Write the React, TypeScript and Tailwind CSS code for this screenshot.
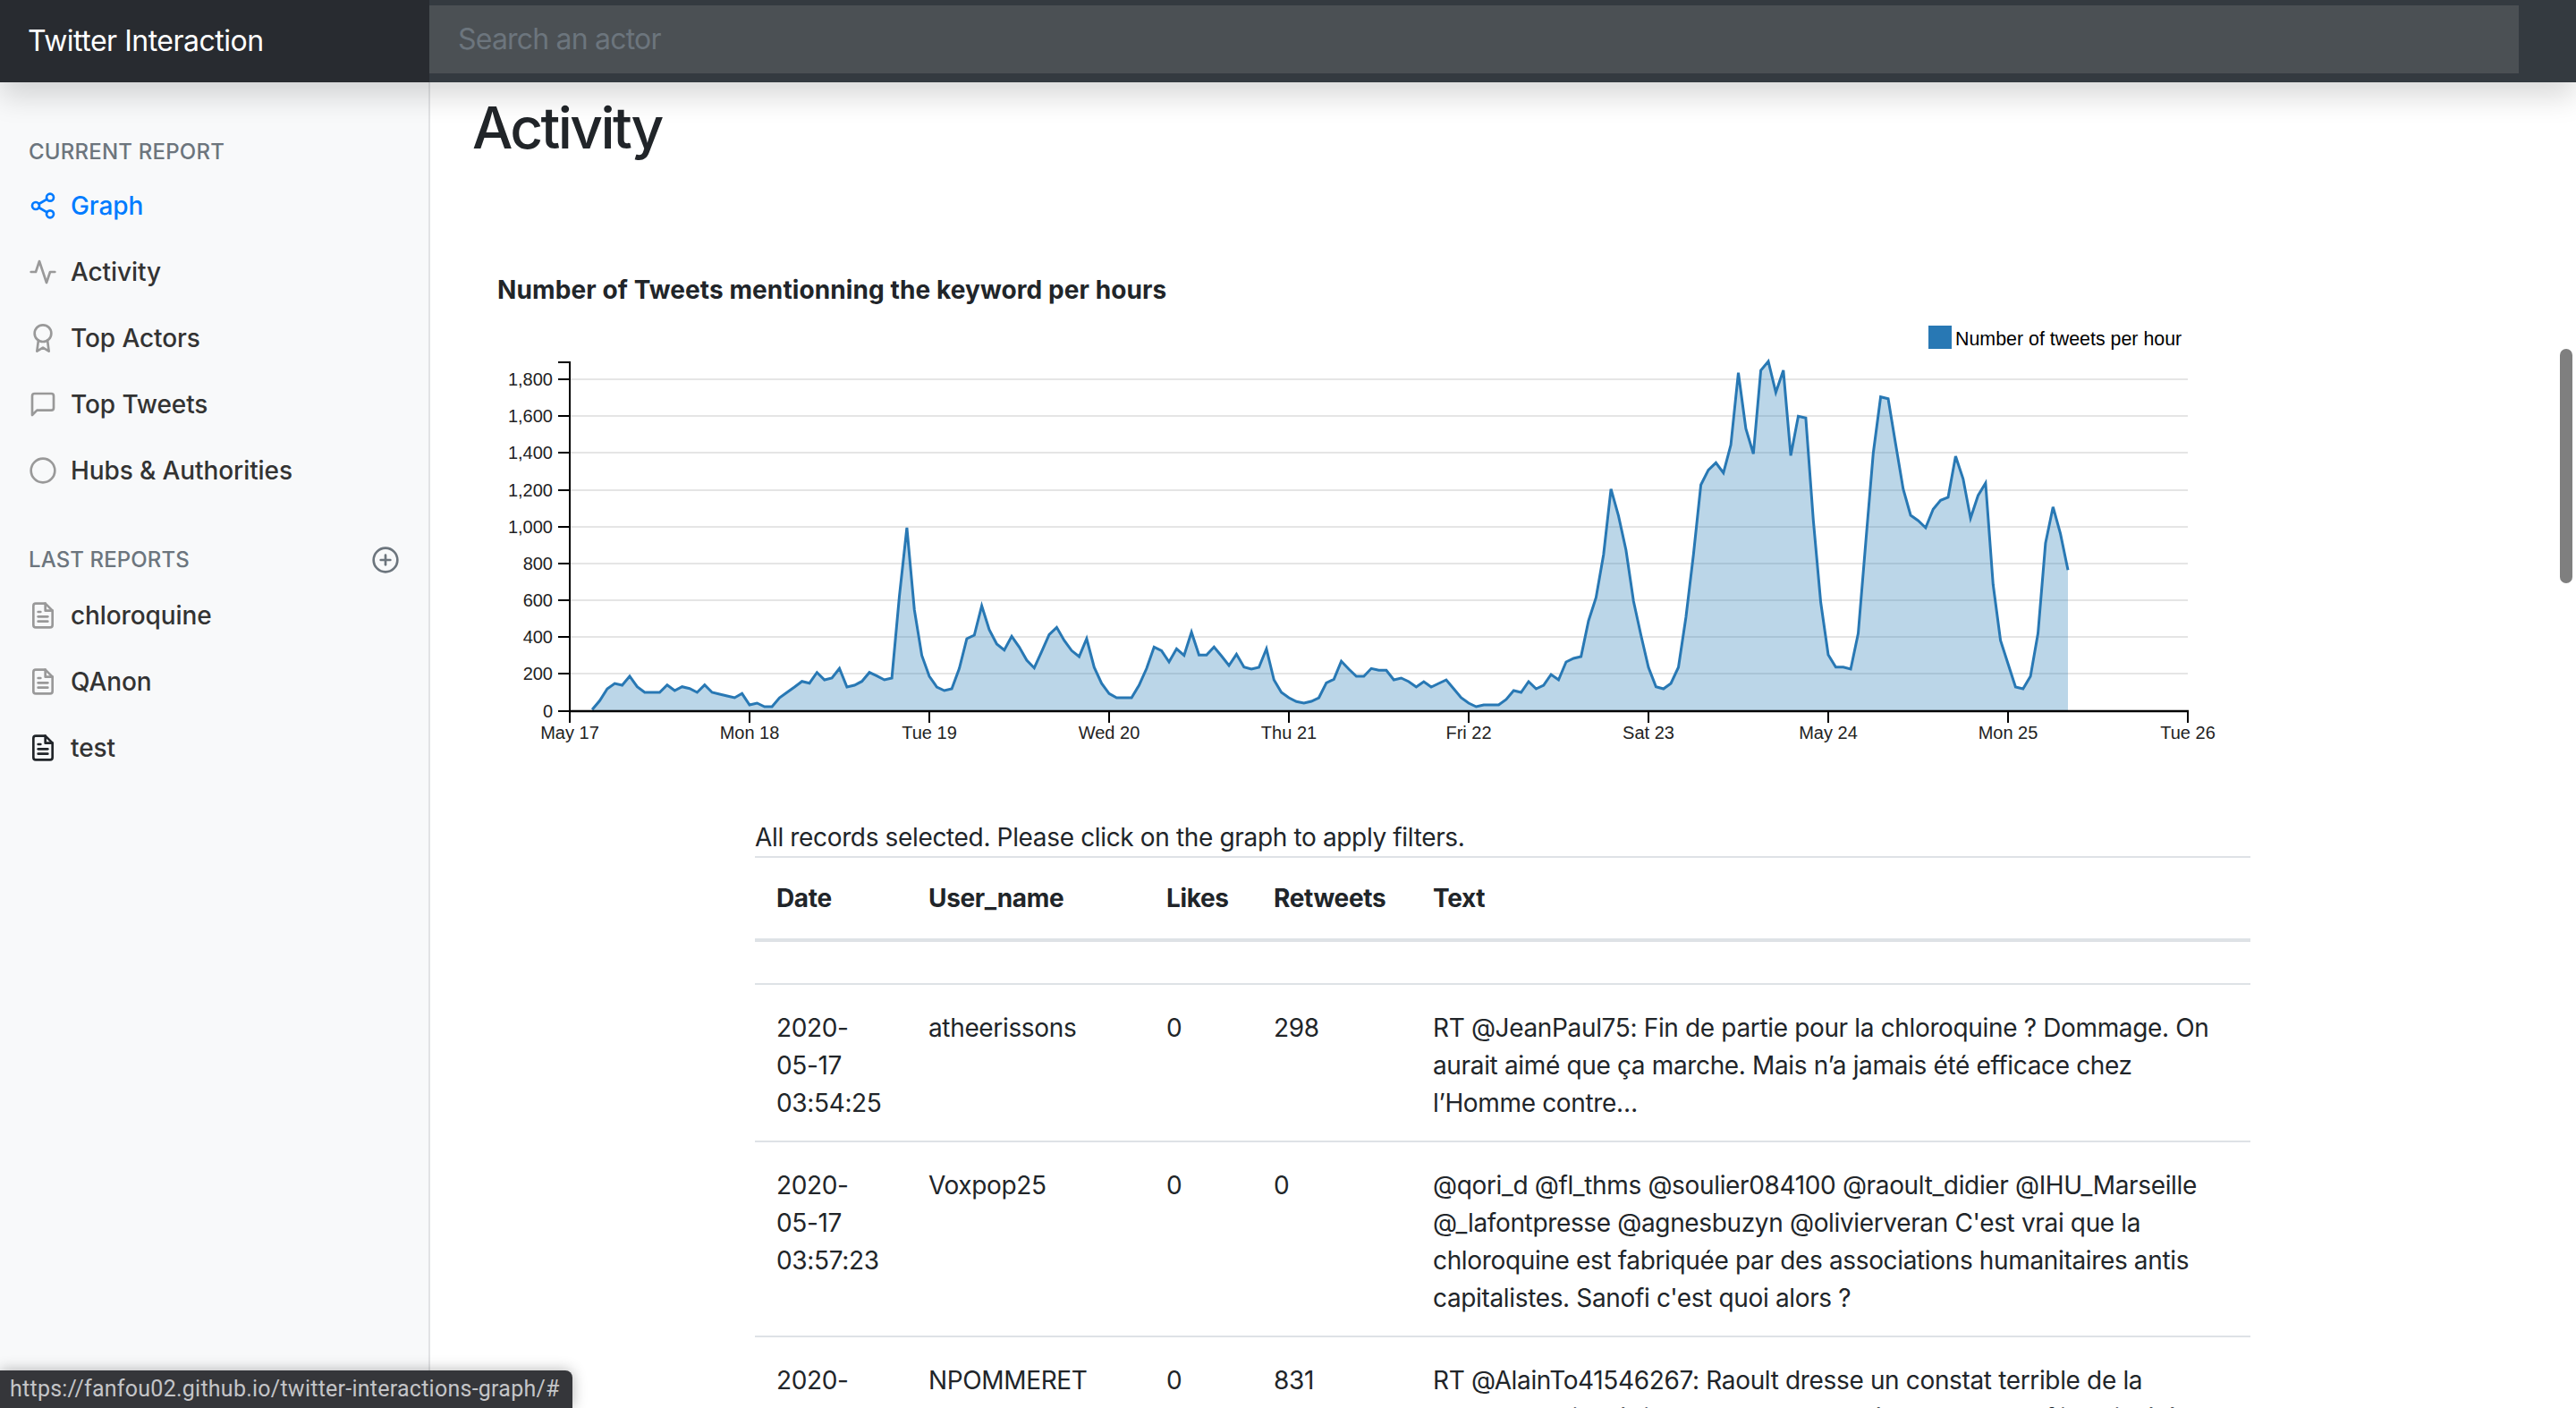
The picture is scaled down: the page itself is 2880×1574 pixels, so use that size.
/**
 * Twitter Interaction - activity report page
 */

import React from 'react';

// polyline heights read off the chart, in chart units: svg y = 340 + v / 3
const SEG_A = [1360, 1330, 1290, 1272, 1278, 1248, 1283, 1302, 1302, 1302, 1277, 1296, 1283, 1289, 1302, 1277, 1302, 1308, 1314, 1320, 1306, 1344, 1338, 1350, 1350, 1320, 1302, 1284, 1265, 1271, 1235, 1260, 1254, 1222, 1284, 1278, 1265, 1235, 1247, 1260, 1254, 980, 750, 1025, 1178, 1248, 1284, 1296, 1290, 1222, 1122, 1110, 1012, 1092, 1140, 1160, 1114, 1150, 1194, 1220, 1165, 1108, 1084, 1128, 1162, 1182, 1122];
const SEG_B = [1218, 1272, 1306, 1320, 1320, 1320, 1278, 1222, 1150, 1162, 1200, 1156, 1178, 1100, 1177, 1177, 1150, 1180, 1212, 1174, 1217, 1224, 1218, 1156, 1260, 1302, 1320, 1333, 1338, 1332, 1320, 1270, 1258, 1198, 1224, 1248, 1248, 1222, 1228, 1228, 1260, 1254, 1266, 1284, 1266, 1284, 1272, 1260, 1290, 1320, 1338, 1350, 1344, 1344, 1344, 1326, 1296, 1302, 1266, 1290, 1278, 1242, 1260, 1200, 1188, 1182, 1062, 984, 840];
const SEG_C = [620, 710, 825, 996, 1110, 1218, 1283, 1290, 1272, 1218, 1050, 840, 606, 556, 532, 566, 472, 230, 418, 502, 222, 192, 296, 222, 508, 376, 382, 724, 1000, 1176, 1217, 1217, 1224, 1104, 800, 500, 311, 317, 470, 620, 708, 726, 750, 688, 658, 648, 510, 586, 718, 642, 600, 940, 1128, 1206, 1284, 1290, 1248, 1104, 802, 680, 770, 892];

const toPoints = (values: number[], startHour: number) =>
  values.map((v, i) => `${(637 + (startHour + i) * 8.375).toFixed(1)},${(340 + v / 3).toFixed(1)}`);

const linePoints = [...toPoints(SEG_A, 3), ...toPoints(SEG_B, 70), ...toPoints(SEG_C, 139)];
const lastX = 637 + (139 + SEG_C.length - 1) * 8.375;
const areaPoints = [`${637 + 3 * 8.375},795`, ...linePoints, `${lastX},795`];

const yTicks = [
  { label: '0', y: 795 },
  { label: '200', y: 753 },
  { label: '400', y: 712 },
  { label: '600', y: 671 },
  { label: '800', y: 630 },
  { label: '1,000', y: 589 },
  { label: '1,200', y: 548 },
  { label: '1,400', y: 506 },
  { label: '1,600', y: 465 },
  { label: '1,800', y: 424 },
];

const xLabels = ['May 17', 'Mon 18', 'Tue 19', 'Wed 20', 'Thu 21', 'Fri 22', 'Sat 23', 'May 24', 'Mon 25', 'Tue 26'];

const rows = [
  {
    date: '2020-05-17 03:54:25',
    user: 'atheerissons',
    likes: '0',
    retweets: '298',
    text: 'RT @JeanPaul75: Fin de partie pour la chloroquine ? Dommage. On aurait aimé que ça marche. Mais n’a jamais été efficace chez l’Homme contre…',
  },
  {
    date: '2020-05-17 03:57:23',
    user: 'Voxpop25',
    likes: '0',
    retweets: '0',
    text: "@qori_d @fl_thms @soulier084100 @raoult_didier @IHU_Marseille @_lafontpresse @agnesbuzyn @olivierveran C'est vrai que la chloroquine est fabriquée par des associations humanitaires antis capitalistes. Sanofi c'est quoi alors ?",
  },
  {
    date: '2020-05-17 04:02:11',
    user: 'NPOMMERET',
    likes: '0',
    retweets: '831',
    text: 'RT @AlainTo41546267: Raoult dresse un constat terrible de la recherche biomédicale en France et dénonce les conflits d’intérêts…',
  },
];

const Feather: React.FC<{ className?: string; children: React.ReactNode }> = ({ className, children }) => (
  <svg
    viewBox="0 0 24 24"
    fill="none"
    stroke="currentColor"
    strokeWidth="2"
    strokeLinecap="round"
    strokeLinejoin="round"
    className={className}
  >
    {children}
  </svg>
);

const fileText = (
  <>
    <path d="M14 2H6a2 2 0 0 0-2 2v16a2 2 0 0 0 2 2h12a2 2 0 0 0 2-2V8z" />
    <polyline points="14 2 14 8 20 8" />
    <line x1="16" y1="13" x2="8" y2="13" />
    <line x1="16" y1="17" x2="8" y2="17" />
    <polyline points="10 9 9 9 8 9" />
  </>
);

const NavItem: React.FC<{ icon: React.ReactNode; label: string; active?: boolean; iconClass?: string }> = ({
  icon,
  label,
  active,
  iconClass,
}) => (
  <li className={`flex items-center h-[74px] pl-8 text-[28px] leading-[42px] font-medium tracking-[-0.1px] ${active ? 'text-[#007bff]' : 'text-[#333]'}`}>
    <Feather className={`w-8 h-8 mr-[15px] shrink-0 ${active ? 'text-[#007bff]' : iconClass ?? 'text-[#999]'}`}>{icon}</Feather>
    {label}
  </li>
);

const Chart: React.FC = () => (
  <svg viewBox="556 350 1960 490" className="w-[1960px] h-[490px] block" fontFamily='"Liberation Sans", Arial, sans-serif'>
    {yTicks.slice(1).map((t) => (
      <line key={t.label} x1="637" x2="2446" y1={t.y} y2={t.y} stroke="#e5e5e5" strokeWidth="2" />
    ))}
    <polygon points={areaPoints.join(' ')} fill="#1f77b4" fillOpacity="0.3" />
    <polyline points={linePoints.join(' ')} fill="none" stroke="#2878b4" strokeWidth="3" />

    <path d="M624 405H637V795" fill="none" stroke="#000" strokeWidth="2" />
    <line x1="636" x2="2447" y1="795" y2="795" stroke="#000" strokeWidth="2.5" />
    {yTicks.map((t) => (
      <g key={t.label}>
        <line x1="624" x2="637" y1={t.y} y2={t.y} stroke="#000" strokeWidth="2" />
        <text x="618" y={t.y + 7} textAnchor="end" fontSize="20" fill="#222">
          {t.label}
        </text>
      </g>
    ))}
    {xLabels.map((label, i) => (
      <g key={label}>
        <line x1={637 + i * 201} x2={637 + i * 201} y1="795" y2="808" stroke="#000" strokeWidth="2" />
        <text x={637 + i * 201} y="826" textAnchor="middle" fontSize="20" fill="#222">
          {label}
        </text>
      </g>
    ))}

    <rect x="2156" y="364" width="26" height="26" fill="#2878b4" />
    <text x="2186" y="386" fontSize="21.4" fill="#000">
      Number of tweets per hour
    </text>
  </svg>
);

export default function App() {
  return (
    <div className="relative h-screen overflow-hidden flex flex-col bg-white font-['Inter','Noto_Sans',sans-serif] text-[#212529]">
      {/* Navbar */}
      <header className="relative z-10 flex h-[92px] shrink-0 bg-[#343a40] shadow-[0_16px_32px_rgba(0,0,0,0.15)]">
        <div className="w-[480px] shrink-0 bg-[#282b30] pl-[31px] flex items-center text-[32px] tracking-[-0.5px] text-white">
          Twitter Interaction
        </div>
        <div className="w-[2336px] pt-[6px]">
          <div className="h-[76px] bg-[#4b5054] pl-8 flex items-center text-[32px] tracking-[-0.8px] text-[#6c757d]">Search an actor</div>
        </div>
      </header>

      <div className="flex flex-1 min-h-0">
        {/* Sidebar */}
        <aside className="w-[481px] shrink-0 bg-[#f8f9fa] border-r-2 border-[#e2e3e5] pt-[60px]">
          <h6 className="pl-8 h-[41px] text-[24px] leading-9 font-medium uppercase tracking-[0.2px] text-[#6c757d]">Current report</h6>
          <ul>
            <NavItem
              active
              label="Graph"
              icon={
                <>
                  <circle cx="18" cy="5" r="3" />
                  <circle cx="6" cy="12" r="3" />
                  <circle cx="18" cy="19" r="3" />
                  <line x1="8.59" y1="13.51" x2="15.42" y2="17.49" />
                  <line x1="15.41" y1="6.51" x2="8.59" y2="10.49" />
                </>
              }
            />
            <NavItem label="Activity" icon={<polyline points="22 12 18 12 15 21 9 3 6 12 2 12" />} />
            <NavItem
              label="Top Actors"
              icon={
                <>
                  <circle cx="12" cy="8" r="7" />
                  <polyline points="8.21 13.89 7 23 12 20 17 23 15.79 13.88" />
                </>
              }
            />
            <NavItem
              label="Top Tweets"
              icon={<path d="M21 15a2 2 0 0 1-2 2H7l-4 4V5a2 2 0 0 1 2-2h14a2 2 0 0 1 2 2z" />}
            />
            <NavItem label="Hubs & Authorities" icon={<circle cx="12" cy="12" r="10" />} />
          </ul>

          <div className="mt-[45px] mb-[7px] pl-8 pr-8 flex items-center justify-between h-9 text-[#6c757d]">
            <h6 className="text-[24px] leading-9 font-medium uppercase tracking-[0.1px]">Last reports</h6>
            <Feather className="w-8 h-8">
              <circle cx="12" cy="12" r="10" />
              <line x1="12" y1="8" x2="12" y2="16" />
              <line x1="8" y1="12" x2="16" y2="12" />
            </Feather>
          </div>
          <ul>
            <NavItem label="chloroquine" icon={fileText} />
            <NavItem label="QAnon" icon={fileText} />
            <NavItem label="test" icon={fileText} iconClass="text-[#212529]" />
          </ul>
        </aside>

        {/* Main */}
        <main className="flex-1 min-w-0 pl-12 pt-[12px] overflow-hidden">
          <h2 className="-ml-px text-[64px] leading-[77px] font-medium tracking-[-2.6px]">Activity</h2>
          <h3 className="ml-[27px] mt-[122px] text-[28px] leading-[42px] font-bold tracking-[0.1px]">
            Number of Tweets mentionning the keyword per hours
          </h3>
          <div className="ml-[27px] mt-[5px]">
            <Chart />
          </div>

          {/* Tweets table */}
          <div className="ml-[315px] w-[1672px] mt-[75px] tracking-[-0.35px]">
            <p className="text-[28px] leading-[42px]">All records selected. Please click on the graph to apply filters.</p>
            <table className="w-full table-fixed text-[28px] leading-[42px] border-t-2 border-[#dee2e6]">
              <colgroup>
                <col className="w-[170px]" />
                <col className="w-[266px]" />
                <col className="w-[120px]" />
                <col className="w-[178px]" />
                <col />
              </colgroup>
              <thead>
                <tr className="border-b-4 border-[#dee2e6] text-left">
                  <th className="p-6 font-bold">Date</th>
                  <th className="p-6 font-bold">User_name</th>
                  <th className="p-6 font-bold">Likes</th>
                  <th className="p-6 font-bold">Retweets</th>
                  <th className="p-6 font-bold">Text</th>
                </tr>
              </thead>
              <tbody>
                <tr className="h-[49px]">
                  <td colSpan={5} />
                </tr>
                {rows.map((row) => (
                  <tr key={row.date} className="border-t-2 border-[#dee2e6] align-top">
                    <td className="px-6 pt-[27px] pb-[21px]">{row.date}</td>
                    <td className="px-6 pt-[27px] pb-[21px]">{row.user}</td>
                    <td className="px-6 pt-[27px] pb-[21px]">{row.likes}</td>
                    <td className="px-6 pt-[27px] pb-[21px]">{row.retweets}</td>
                    <td className="px-6 pt-[27px] pb-[21px]">{row.text}</td>
                  </tr>
                ))}
              </tbody>
            </table>
          </div>
        </main>
      </div>

      {/* Scrollbar thumb */}
      <div className="absolute right-[4px] top-[390px] w-[14px] h-[262px] rounded-full bg-[#7f7f7f]" />

      {/* Browser status bubble */}
      <div className="absolute z-20 left-0 bottom-0 h-[42px] w-[640px] rounded-tr-lg bg-[#35363a] shadow-[0_0_16px_rgba(0,0,0,0.3)] pl-[11px] flex items-center text-[25px] tracking-[0.25px] text-[#c4c5c8] whitespace-nowrap font-['Roboto',sans-serif]">
        https://fanfou02.github.io/twitter-interactions-graph/#
      </div>
    </div>
  );
}
